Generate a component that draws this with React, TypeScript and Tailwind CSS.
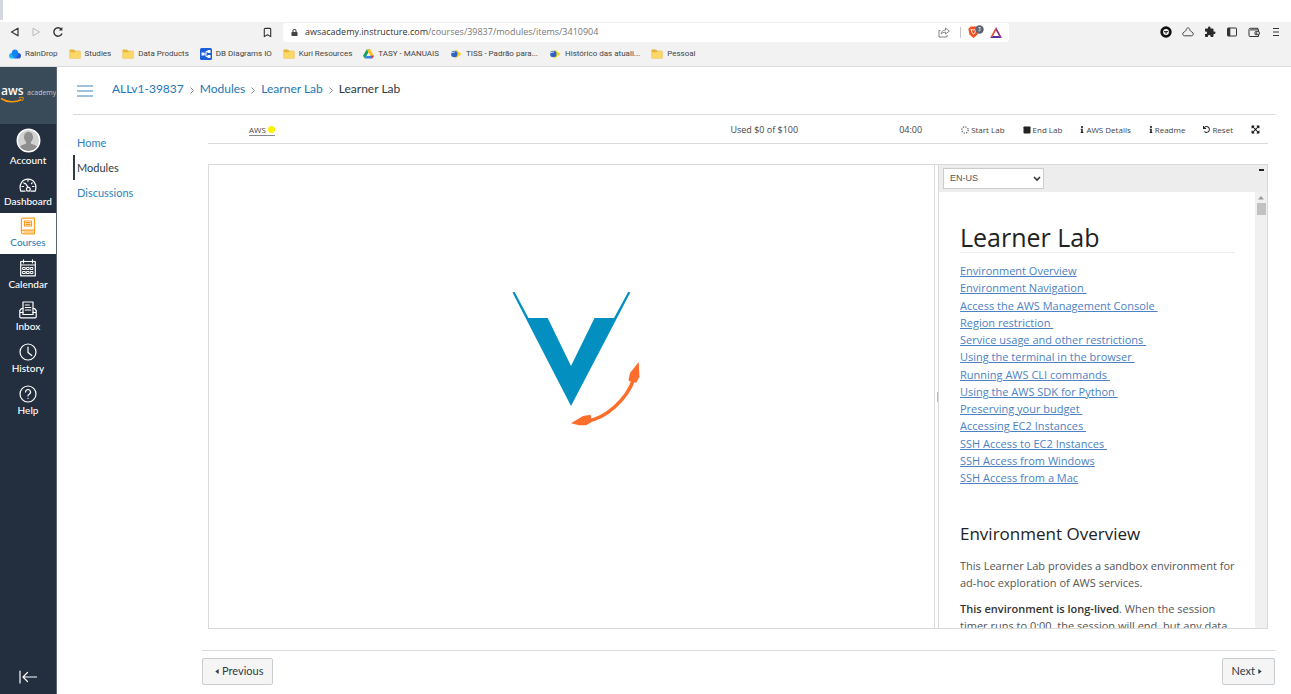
import type { ReactNode } from "react";
import { Bookmark } from "lucide-react";
import { FaInfo, FaLock, FaSquare, FaUndo, FaExpandArrowsAlt } from "react-icons/fa";
import { MdExtension } from "react-icons/md";

const chromeFont = "font-['Open_Sans','Noto_Sans',sans-serif]";
const appFont = "font-['Lato',sans-serif]";
const readmeFont = "font-['Open_Sans',sans-serif]";

function FolderIcon() {
  return (
    <svg viewBox="0 0 12 10" className="h-[10px] w-3 shrink-0">
      <path d="M.5 2V9a.6.6 0 0 0 .6.6h9.8a.6.6 0 0 0 .6-.6V2.400a.6.6 0 0 0-.6-.6H6L5 .6H1.100a.6.6 0 0 0-.6.6z" fill="#e5b53a" />
      <path d="M.8 3.200h5L6.900 2.300h4.300V9.200H.8z" fill="#fbd768" />
    </svg>
  );
}

function RainDropIcon() {
  return (
    <svg viewBox="0 0 12 10" className="h-[10px] w-3 shrink-0">
      <path d="M0 6.700A2.800 2.800 0 0 1 2.800 4H6v5.500H2.800A2.800 2.800 0 0 1 0 6.700z" fill="#1fb8f4" />
      <path d="M12 6.700A2.800 2.800 0 0 0 9.200 4H6v5.500h3.200A2.800 2.800 0 0 0 12 6.700z" fill="#2a4fd8" />
      <path d="M2.700 4.200C2.700 2 4 .5 6 .5s3.300 1.500 3.300 3.700C9.300 6.500 8 8 6 9.500 4 8 2.700 6.500 2.700 4.200z" fill="#1385f2" />
    </svg>
  );
}

function DiagramIcon() {
  return (
    <svg viewBox="0 0 12 12" className="size-3 shrink-0">
      <rect width="12" height="12" rx="1.500" fill="#1a5fd6" />
      <path d="M4 6h2M8 3.500H6v5h2" stroke="#fff" fill="none" />
      <rect x="1.500" y="4.500" width="3" height="3" fill="#fff" />
      <rect x="7.500" y="2" width="3" height="3" fill="#fff" />
      <rect x="7.500" y="7" width="3" height="3" fill="#fff" />
    </svg>
  );
}

function DriveIcon() {
  return (
    <svg viewBox="0 0 12 10" className="h-[10px] w-[11px] shrink-0">
      <path d="M4 0h4L2 10 0 6.800z" fill="#18a05e" />
      <path d="M4 0h4l4 6.800H8z" fill="#fcc31e" />
      <path d="M3.900 6.800H12L10 10H2z" fill="#3d7ff0" />
      <path d="M8.100 6.800H12L10 10z" fill="#e3402f" />
      <path d="M6 3.500 8 6.800H4z" fill="#f2f2f2" />
    </svg>
  );
}

function AnsIcon() {
  return (
    <svg viewBox="0 0 12 10" className="h-[10px] w-3 shrink-0">
      <path d="M5.500.3 11.500 5l-6 4.700z" fill="#f6d327" />
      <circle cx="4.300" cy="5" r="3.200" fill="#2f63c4" />
      <path d="M.5 4 5 2.800" stroke="#e8edf7" strokeWidth=".9" />
    </svg>
  );
}

const bookmarks: { label: string; icon: ReactNode }[] = [
  { label: "RainDrop", icon: <RainDropIcon /> },
  { label: "Studies", icon: <FolderIcon /> },
  { label: "Data Products", icon: <FolderIcon /> },
  { label: "DB Diagrams IO", icon: <DiagramIcon /> },
  { label: "Kuri Resources", icon: <FolderIcon /> },
  { label: "TASY - MANUAIS", icon: <DriveIcon /> },
  { label: "TISS - Padrão para...", icon: <AnsIcon /> },
  { label: "Histórico das atuali...", icon: <AnsIcon /> },
  { label: "Pessoal", icon: <FolderIcon /> },
];

function BrowserChrome() {
  return (
    <header className={`shrink-0 ${chromeFont}`}>
      <div className="h-[22px] bg-white">
        <div className="h-5 w-[3px] bg-[#d3d6dc]" />
      </div>
      <div className="h-[45px] border-b border-[#dcdcdc] bg-[#f2f2f2]">
        <div className="flex h-5 items-center">
          <div className="flex w-[283px] shrink-0 items-center pl-[10px]">
            <button aria-label="Back">
              <svg viewBox="0 0 10 10" className="size-[10px]" fill="none" stroke="#333" strokeWidth="1.200" strokeLinejoin="round">
                <path d="M8 1.200v7.600L1.500 5z" />
              </svg>
            </button>
            <button aria-label="Forward" className="ml-[11px]">
              <svg viewBox="0 0 10 10" className="size-[10px]" fill="none" stroke="#bbb" strokeWidth="1" strokeLinejoin="round">
                <path d="M2 1.200v7.600L8.500 5z" />
              </svg>
            </button>
            <button aria-label="Reload" className="ml-[11px]">
              <svg viewBox="0 0 12 12" className="size-3" fill="none" stroke="#333" strokeWidth="1.400">
                <path d="M10 7.400A4.200 4.200 0 1 1 9.300 3.300" />
                <path d="M10.400 1v3.600H6.800z" fill="#333" stroke="none" />
              </svg>
            </button>
            <button aria-label="Bookmark this page" className="mr-[10px] ml-auto">
              <Bookmark size={11} strokeWidth={2.400} color="#333" />
            </button>
          </div>
          <div className="flex h-[19px] w-[726px] items-center rounded-[3px] bg-white pr-[7px] pl-2">
            <FaLock size={7} color="#444" />
            <div className="ml-[7px] text-[9px] text-[#777]">
              <span className="text-[#333]">awsacademy.instructure.com</span>/courses/39837/modules/items/3410904
            </div>
            <svg viewBox="0 0 12 12" className="ml-auto size-3" fill="none" stroke="#777" strokeWidth=".9">
              <path d="M2.500 4.500H1v6.500h8V9" />
              <path d="M3.200 8c.3-2.500 1.800-3.800 4.300-4V2l3.800 3.100L7.500 8V6.200C5.500 6.200 4.200 6.800 3.200 8z" />
            </svg>
            <div className="mr-[7px] ml-[10px] h-[11px] w-px bg-[#c8c8c8]" />
            <svg viewBox="0 0 16 14" className="h-[14px] w-4">
              <path d="M2.500 1.500h6L10.500 4l-1 5.500L5.500 13 1.500 9.500.3 4z" fill="#f4511e" />
              <path d="M3 4.300 5.500 5 8 4.300 7 7.500 5.500 9.300 4 7.500z" fill="none" stroke="#fff" strokeWidth=".9" />
              <circle cx="11.500" cy="4.500" r="4.200" fill="#5b6472" />
              <path d="M10.300 2.600h2.200l-1.100 1.500c1.600.3 1.100 2.200-1.100 1.700" fill="none" stroke="#fff" strokeWidth=".7" />
            </svg>
            <svg viewBox="0 0 12 11" className="ml-[6px] h-[11px] w-3">
              <path d="M6 0 0 11l3-2L6 3.600z" fill="#f04e2b" />
              <path d="M6 0v3.600L9 9l3 2z" fill="#9c2579" />
              <path d="M0 11h12L9 9H3z" fill="#5a2d9c" />
            </svg>
          </div>
          <div className="ml-auto flex items-center gap-[10px] pr-[9px]">
            <svg viewBox="0 0 12 12" className="size-3">
              <circle cx="6" cy="6" r="5.700" fill="#111" />
              <circle cx="6" cy="6" r="2.900" fill="#fff" />
              <path d="M4 5.700h4M6 5.500v2.300" stroke="#111" />
            </svg>
            <svg viewBox="0 0 12 12" className="size-3" fill="none" stroke="#333" strokeWidth=".9">
              <path d="M4 4.500C4.300 1 7.700 1 8 4.500c.1 1 3.400 1.400 3.300 3.600-.1 1-.8 1.700-1.800 1.700h-7C1.500 9.800.8 9.100.7 8.100.6 5.900 3.900 5.500 4 4.500z" />
            </svg>
            <MdExtension size={12} color="#2b2b2b" />
            <svg viewBox="0 0 12 12" className="size-3" fill="none" stroke="#333" strokeWidth="1">
              <rect x="1.500" y="2" width="9" height="8" rx=".5" />
              <path d="M3 2v8" strokeWidth="2.600" />
            </svg>
            <svg viewBox="0 0 12 12" className="size-3" fill="none" stroke="#333" strokeWidth="1">
              <path d="M10 3.800V2.300H2.200a1.200 1.200 0 0 0-1.200 1V9.500a1 1 0 0 0 1 1h8.500V3.900H2" />
              <rect x="7" y="5.700" width="4.300" height="3" rx=".5" fill="#f2f2f2" />
              <circle cx="8.500" cy="7.200" r=".4" />
            </svg>
            <button aria-label="Menu">
              <svg viewBox="0 0 12 12" className="size-3" stroke="#333" strokeWidth="1">
                <path d="M3 2.500h6M3 6h6M3 9.500h6" />
              </svg>
            </button>
          </div>
        </div>
        <nav className="flex h-6 items-center gap-[11px] pl-[9px] font-['Roboto',sans-serif] text-[8px] whitespace-nowrap text-[#444]">
          {bookmarks.map((b) => (
            <a key={b.label} href="#" className="flex items-center gap-1">
              {b.icon}
              {b.label}
            </a>
          ))}
        </nav>
      </div>
    </header>
  );
}

function NavIcon({ children }: { children: ReactNode }) {
  return (
    <svg viewBox="0 0 18 18" className="size-[18px]" fill="none" stroke="currentColor" strokeWidth="1.200" strokeLinecap="round" strokeLinejoin="round">
      {children}
    </svg>
  );
}

const navItems: { label: string; icon: ReactNode; active?: boolean }[] = [
  {
    label: "Dashboard",
    icon: (
      <NavIcon>
        <path d="M6 15.200H1.800C-.5 8.500 3.500 3.200 9 3.200s9.500 5.300 7.200 12H12" />
        <path d="M6.500 7.500 9 11.200M3 10.500h1.500M4.800 6.800l.8.800M9 4v1.300M13.200 6.800l-.8.800M15 10.500h-1.500" />
        <circle cx="9.300" cy="13.200" r="1.900" />
      </NavIcon>
    ),
  },
  {
    label: "Courses",
    active: true,
    icon: (
      <NavIcon>
        <path d="M4 1.200h11.500v12H4.200a1.800 1.800 0 0 0 0 3.600h11.300v-3.500M2.400 15V2.800A1.600 1.600 0 0 1 4 1.200" />
        <path d="M5.500 4h7v5h-7zM7 5.700h4M7 7.400h4M5 15h9" />
      </NavIcon>
    ),
  },
  {
    label: "Calendar",
    icon: (
      <NavIcon>
        <path d="M1.700 2.500h14.600v14.300H1.700zM1.700 6h14.600M4.500.8v3M13.500.8v3" />
        <path strokeWidth="1" d="M4 8.500h2.300v2H4zM7.800 8.500h2.300v2H7.800zM11.600 8.500h2.300v2h-2.300zM4 12.500h2.300v2H4zM7.800 12.500h2.300v2H7.800zM11.600 12.500h2.300v2h-2.300z" />
      </NavIcon>
    ),
  },
  {
    label: "Inbox",
    icon: (
      <NavIcon>
        <path d="M4 11.500V1h10v10.500M6.300 4h4M6.300 6.500h5.500M6.300 9h5.500" />
        <path d="M4 7.500H2.500L.8 9.500v6.300a1 1 0 0 0 1 1h14.400a1 1 0 0 0 1-1V9.500l-1.700-2H14M1 11.500h3v2h10v-2h3" />
      </NavIcon>
    ),
  },
  {
    label: "History",
    icon: (
      <NavIcon>
        <circle cx="9" cy="9" r="8" />
        <path d="M9 4v5.500l3.800 3" />
      </NavIcon>
    ),
  },
  {
    label: "Help",
    icon: (
      <NavIcon>
        <circle cx="9" cy="9" r="8" />
        <path d="M6.500 7a2.500 2.500 0 1 1 3.700 2.200c-.8.400-1.200.8-1.200 1.800M9 13.300v.2" />
      </NavIcon>
    ),
  },
];

function Sidebar() {
  return (
    <nav className="flex w-[57px] shrink-0 flex-col border-r border-[#5d6772] bg-[#232f3e] text-[10px] font-medium text-white">
      <a href="#" aria-label="AWS Academy" className="flex h-[57px] shrink-0 items-center bg-[#394b58]">
        <svg viewBox="0 0 56 24" className="h-6 w-14">
          <text x="1" y="11" fontSize="12" fontWeight="600" fill="#fff" fontFamily="'Open Sans', sans-serif">aws</text>
          <text x="27" y="11" fontSize="7" fill="#c3cad0" fontFamily="'Open Sans', sans-serif">academy</text>
          <path d="M1 14.500c6.500 4.300 14.500 4.300 20.500 1" fill="none" stroke="#f90" strokeWidth="1.500" />
          <path d="M19 13.800c2-.7 4-.6 4.300-.1.300.6-.3 2.300-1.300 3.300" fill="none" stroke="#f90" />
        </svg>
      </a>
      <a href="#" className="flex h-[47px] shrink-0 flex-col items-center pt-1">
        <svg viewBox="0 0 26 26" className="size-[25px]">
          <defs>
            <clipPath id="avatar">
              <circle cx="13" cy="13" r="11" />
            </clipPath>
          </defs>
          <circle cx="13" cy="13" r="11.700" fill="#d2d2d2" stroke="#fff" strokeWidth="1.500" />
          <g clipPath="url(#avatar)" fill="#8f8f8f">
            <ellipse cx="13" cy="9.500" rx="4.700" ry="5.700" />
            <path d="M10.500 13h5v3.500c3 1 6.500 1.500 7 4.500v5h-19v-5c.5-3 4-3.500 7-4.500z" />
          </g>
        </svg>
        <span className="leading-[14px]">Account</span>
      </a>
      {navItems.map((item) => (
        <a
          key={item.label}
          href="#"
          className={
            item.active
              ? "flex h-[41px] shrink-0 flex-col items-center bg-white pt-1 font-normal text-[#2377b5]"
              : "flex h-[42px] shrink-0 flex-col items-center pt-[5px]"
          }
        >
          <span className={item.active ? "text-[#fc9d1c]" : "text-white"}>{item.icon}</span>
          <span className="leading-[14px]">{item.label}</span>
        </a>
      ))}
      <button aria-label="Minimize navigation" className="mt-auto flex h-[34px] items-center justify-center">
        <NavIcon>
          <path d="M1 3v12M17.500 9H4M8.500 4.500 4 9l4.500 4.500" />
        </NavIcon>
      </button>
    </nav>
  );
}

const crumbs = ["ALLv1-39837", "Modules", "Learner Lab"];

function SpinnerIcon() {
  return (
    <svg viewBox="0 0 10 10" className="size-2" fill="none" stroke="#666" strokeWidth="1.600">
      <circle cx="5" cy="5" r="4" strokeDasharray="1.600 1.540" />
    </svg>
  );
}

const labActions: { label: string; icon: ReactNode }[] = [
  { label: "Start Lab", icon: <SpinnerIcon /> },
  { label: "End Lab", icon: <FaSquare size={8} color="#222" /> },
  { label: "AWS Details", icon: <FaInfo className="h-[7px] w-1" color="#222" /> },
  { label: "Readme", icon: <FaInfo className="h-[7px] w-1" color="#222" /> },
  { label: "Reset", icon: <FaUndo size={7} color="#222" /> },
];

function LabBar() {
  return (
    <div className={`flex h-[29px] shrink-0 items-center border-b border-[#d9dcdf] pt-px text-[9px] text-[#444] ${readmeFont}`}>
      <div className="flex flex-1 pl-[41px]">
        <a href="#" className="flex items-center gap-[2px] border-b border-[#888] text-[8px] leading-[11px]">
          AWS
          <span className="size-[7px] rounded-full bg-[#fff200]" />
        </a>
      </div>
      <span>Used $0 of $100</span>
      <span className="ml-[101px]">04:00</span>
      <div className="ml-[39px] flex items-center gap-[18px] pr-2 text-[8px]">
        {labActions.map((a) => (
          <button key={a.label} className="flex items-center gap-[2px]">
            {a.icon}
            {a.label}
          </button>
        ))}
        <button aria-label="Full screen">
          <FaExpandArrowsAlt size={9} color="#111" />
        </button>
      </div>
    </div>
  );
}

const toc = [
  "Environment Overview",
  "Environment Navigation\u00a0",
  "Access the AWS Management Console\u00a0",
  "Region restriction\u00a0",
  "Service usage and other restrictions\u00a0",
  "Using the terminal in the browser\u00a0",
  "Running AWS CLI commands\u00a0",
  "Using the AWS SDK for Python\u00a0",
  "Preserving your budget\u00a0",
  "Accessing EC2 Instances\u00a0",
  "SSH Access to EC2 Instances\u00a0",
  "SSH Access from Windows",
  "SSH Access from a Mac",
];

function Readme() {
  return (
    <aside className={`flex w-[329px] shrink-0 flex-col border-l border-[#d9d9d9] ${readmeFont}`}>
      <div className="flex h-[27px] shrink-0 items-start justify-between bg-[#ededed] pt-[3px] pr-[3px] pl-1">
        <div className="relative flex">
          <select aria-label="Language" className="h-[21px] w-[101px] appearance-none border border-[#ccc] bg-white pl-[6px] font-['Liberation_Sans',sans-serif] text-[9px] text-[#555]">
            <option>EN-US</option>
          </select>
          <svg viewBox="0 0 8 6" className="pointer-events-none absolute top-2 right-[3px] h-[6px] w-2" fill="none" stroke="#333" strokeWidth="1.600">
            <path d="m1 1 3 3 3-3" />
          </svg>
        </div>
        <button aria-label="Collapse readme" className="flex pt-px">
          <span className="h-[2px] w-[5px] bg-[#222]" />
        </button>
      </div>
      <div className="flex min-h-0 flex-1">
        <article className="min-w-0 flex-1 overflow-hidden pt-[30px] pr-5 pl-[21px] text-[11px] leading-[17px] text-[#555]">
          <h1 className="border-b border-[#eee] text-[25px] leading-[30px] font-medium text-[#222]">Learner Lab</h1>
          <ul className="mt-[9px] flex h-[224px] flex-col justify-between">
            {toc.map((t) => (
              <li key={t}>
                <a href="#" className="text-[#4c82c4] underline">{t}</a>
              </li>
            ))}
          </ul>
          <h2 className="mt-9 text-[17px] leading-6 font-medium text-[#222]">Environment Overview</h2>
          <p className="mt-[11px]">This Learner Lab provides a sandbox environment for ad-hoc exploration of AWS services.</p>
          <p className="mt-[9px]">
            <strong className="font-semibold text-[#333]">This environment is long-lived</strong>. When the session timer runs to 0:00, the session will end, but any data
          </p>
        </article>
        <div className="flex w-3 shrink-0 flex-col items-center bg-[#f0f0f0]">
          <svg viewBox="0 0 6 4" className="mt-1 h-1 w-[6px]">
            <path d="M3 0 6 3.500H0z" fill="#999" />
          </svg>
          <div className="mt-[3px] h-3 w-[9px] bg-[#c1c1c1]" />
        </div>
      </div>
    </aside>
  );
}

function VocareumMark() {
  return (
    <svg viewBox="472 270 200 180" className="mt-[105px] h-[180px] w-[200px]">
      <path d="M512.500 292.500l2-.8 14 26.300h19.200L571 366l23.500-48H614l14.300-26.300 2 .8L571 406z" fill="#0390c1" />
      <path d="M586 421.500c20-3 41-22 48-43" fill="none" stroke="#fd6d2b" strokeWidth="3.600" />
      <path d="M571 423.300 583 416l7.500-1.300.5 2.300.8 5-5.800 3.200-7 .1z" fill="#fd6d2b" />
      <path d="M638.700 362 630 373l-1.500 7 1 1.200 6.800 1.600 3.200-6z" fill="#fd6d2b" />
    </svg>
  );
}

export default function App() {
  return (
    <div className={`flex h-screen flex-col overflow-hidden bg-white ${appFont}`}>
      <BrowserChrome />
      <div className="flex min-h-0 flex-1">
        <Sidebar />
        <div className="flex min-w-0 flex-1 flex-col pr-4 pl-4">
          <div className="flex h-12 shrink-0 items-center border-b border-[#d5dadd] pl-1 text-[12px]">
            <button aria-label="Toggle course menu">
              <svg viewBox="0 0 16 12" className="h-3 w-4" stroke="#3f83c0" strokeWidth="1.200">
                <path d="M0 1h16M0 6h16M0 11h16" />
              </svg>
            </button>
            <div className="ml-[19px] flex items-center pb-[3px]">
              {crumbs.map((c) => (
                <span key={c} className="flex items-center">
                  <a href="#" className="text-[#2377b5]">{c}</a>
                  <svg viewBox="0 0 4 7" className="mx-[6px] mt-[2px] h-[7px] w-1" fill="none" stroke="#888">
                    <path d="m.5.5 3 3-3 3" />
                  </svg>
                </span>
              ))}
              <span className="text-[#2d3b45]">Learner Lab</span>
            </div>
          </div>
          <div className="flex min-h-0 flex-1">
            <nav className="flex w-[129px] shrink-0 flex-col pt-[15px] text-[11px] leading-[25px]">
              <a href="#" className="border-l-2 border-transparent pl-[2px] text-[#2b83bf]">Home</a>
              <a href="#" className="border-l-2 border-[#2d3b45] pl-[2px] text-[#2d3b45]">Modules</a>
              <a href="#" className="border-l-2 border-transparent pl-[2px] text-[#2b83bf]">Discussions</a>
            </nav>
            <main className="flex min-w-0 flex-1 flex-col">
              <div className="flex min-h-0 flex-1 flex-col pr-[7px] pl-[6px]">
                <LabBar />
                <div className="mt-5 flex min-h-0 flex-1 border border-[#d9d9d9]">
                  <div className="flex min-w-0 flex-1 justify-center">
                    <VocareumMark />
                  </div>
                  <div className="flex w-1 shrink-0 items-center justify-end border-l border-[#d9d9d9]">
                    <span className="h-[10px] w-px bg-[#bbb]" />
                  </div>
                  <Readme />
                </div>
              </div>
              <div className="mt-[21px] flex h-11 shrink-0 items-start justify-between border-t border-[#d5dadd] pt-[7px]">
                <button className="flex h-[27px] items-center gap-[3px] rounded-[2px] border border-[#c7cdd1] bg-[#f5f5f5] pr-[9px] pl-3 text-[11px] text-[#2d3b45]">
                  <svg viewBox="0 0 4 6" className="h-[5px] w-1">
                    <path d="M4 0v6L0 3z" fill="#2d3b45" />
                  </svg>
                  Previous
                </button>
                <button className="flex h-[27px] items-center gap-[3px] rounded-[2px] border border-[#c7cdd1] bg-[#f5f5f5] pr-3 pl-[9px] text-[11px] text-[#2d3b45]">
                  Next
                  <svg viewBox="0 0 4 6" className="h-[5px] w-1">
                    <path d="M0 0v6l4-3z" fill="#2d3b45" />
                  </svg>
                </button>
              </div>
            </main>
          </div>
        </div>
      </div>
    </div>
  );
}
